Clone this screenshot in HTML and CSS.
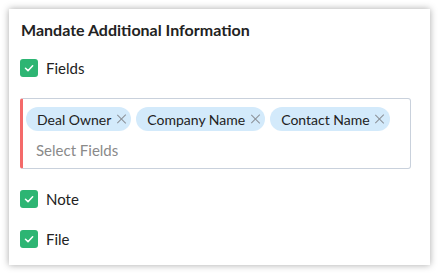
FILE: index.html
```html
<!DOCTYPE html>
<html lang="en">
<head>
    <meta charset="UTF-8">
    <title>Mandate Additional Information</title>
    <link rel="stylesheet" href="styles.css">
</head>
<body>
    <div class="card">
        <h1 class="title">Mandate Additional Information</h1>

        <label class="check">
            <span class="box"><svg viewBox="0 0 10 10"><path d="M2.5 5.2 L4.3 6.9 L7.6 3.4"/></svg></span>
            <span>Fields</span>
        </label>

        <div class="picker">
            <div class="chips">
                <span class="chip">Deal Owner <i class="x"></i></span>
                <span class="chip">Company Name <i class="x"></i></span>
                <span class="chip">Contact Name <i class="x"></i></span>
            </div>
            <div class="placeholder">Select Fields</div>
        </div>

        <label class="check">
            <span class="box"><svg viewBox="0 0 10 10"><path d="M2.5 5.2 L4.3 6.9 L7.6 3.4"/></svg></span>
            <span>Note</span>
        </label>
        <label class="check">
            <span class="box"><svg viewBox="0 0 10 10"><path d="M2.5 5.2 L4.3 6.9 L7.6 3.4"/></svg></span>
            <span>File</span>
        </label>
    </div>
</body>
</html>
```

FILE: styles.css
```css
* {
    margin: 0;
    padding: 0;
    box-sizing: border-box;
}
body {
    background: #fff;
    font-family: Lato, "Noto Sans", sans-serif;
    color: #222;
    padding: 9px;
}
.card {
    width: 421px;
    height: 256px;
    background: #fff;
    box-shadow: 0 0 7px rgba(0, 0, 0, 0.35);
    padding: 11px 11px 0 11px;
}
.title {
    font-size: 16px;
    font-weight: 700;
    line-height: 20px;
    color: #222;
    padding-left: 1px;
}
.check {
    display: flex;
    align-items: center;
    gap: 8px;
    font-size: 15px;
    height: 18px;
    margin-top: 19px;
}
.picker + .check {
    margin-top: 21px;
}
.check + .check {
    margin-top: 22px;
}
.box {
    width: 18px;
    height: 18px;
    border-radius: 3px;
    background: #2db573;
    display: flex;
    align-items: center;
    justify-content: center;
}
.box svg {
    width: 14px;
    height: 14px;
    fill: none;
    stroke: #fff;
    stroke-width: 1.1;
    stroke-linecap: round;
    stroke-linejoin: round;
}
.picker {
    margin-top: 21px;
    width: 391px;
    height: 71px;
    border: 1px solid #c9d1dc;
    border-left: 3px solid #f46a6a;
    border-radius: 3px;
    padding: 8px 3px 0 3px;
}
.chips {
    display: flex;
    gap: 5px;
}
.chip {
    display: inline-flex;
    flex-shrink: 0;
    white-space: nowrap;
    align-items: center;
    height: 24px;
    border-radius: 12px;
    background: #d3eafb;
    font-size: 14px;
    padding: 0 5px 0 11px;
    gap: 5px;
}
.x {
    position: relative;
    width: 10px;
    height: 10px;
}
.x::before, .x::after {
    content: "";
    position: absolute;
    left: 4.4px;
    top: -1px;
    width: 1.2px;
    height: 12px;
    background: #8a8f96;
    transform: rotate(45deg);
}
.x::after {
    transform: rotate(-45deg);
}
.placeholder {
    font-size: 15px;
    color: #8a8a8a;
    margin-top: 9px;
    padding-left: 10px;
    line-height: 20px;
}
```
